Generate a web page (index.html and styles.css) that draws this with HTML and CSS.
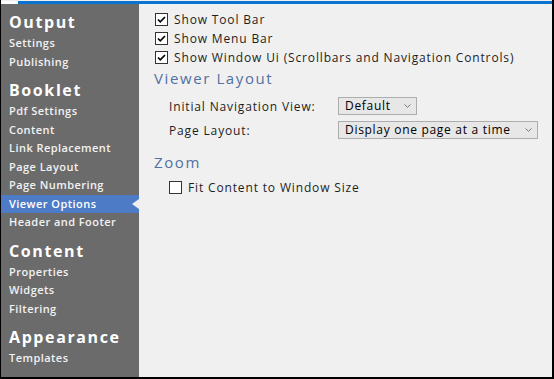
FILE: index.html
```html
<!DOCTYPE html>
<html lang="en">
<head>
    <meta charset="UTF-8">
    <title>Viewer Options</title>
    <link rel="stylesheet" href="styles.css">
</head>
<body>
    <div class="frame">
        <div class="topbar"><span class="topbar-tab"></span></div>
        <div class="main">
            <div class="sidebar">
                <div class="section">
                    <div class="section-title">Output</div>
                    <div class="nav-item">Settings</div>
                    <div class="nav-item">Publishing</div>
                </div>
                <div class="section">
                    <div class="section-title">Booklet</div>
                    <div class="nav-item">Pdf Settings</div>
                    <div class="nav-item">Content</div>
                    <div class="nav-item">Link Replacement</div>
                    <div class="nav-item">Page Layout</div>
                    <div class="nav-item">Page Numbering</div>
                    <div class="nav-item active">Viewer Options</div>
                    <div class="nav-item">Header and Footer</div>
                </div>
                <div class="section">
                    <div class="section-title">Content</div>
                    <div class="nav-item">Properties</div>
                    <div class="nav-item">Widgets</div>
                    <div class="nav-item">Filtering</div>
                </div>
                <div class="section">
                    <div class="section-title">Appearance</div>
                    <div class="nav-item">Templates</div>
                </div>
            </div>

            <div class="content">
                <label class="check-row">
                    <span class="checkbox checked"><svg viewBox="0 0 11 11"><path d="M2 5.5 L4.3 7.8 L9 3" /></svg></span>
                    Show Tool Bar
                </label>
                <label class="check-row">
                    <span class="checkbox checked"><svg viewBox="0 0 11 11"><path d="M2 5.5 L4.3 7.8 L9 3" /></svg></span>
                    Show Menu Bar
                </label>
                <label class="check-row">
                    <span class="checkbox checked"><svg viewBox="0 0 11 11"><path d="M2 5.5 L4.3 7.8 L9 3" /></svg></span>
                    Show Window Ui (Scrollbars and Navigation Controls)
                </label>

                <h2 class="group-title">Viewer Layout</h2>
                <div class="form-grid">
                    <span class="form-label">Initial Navigation View:</span>
                    <span class="dropdown dropdown-short">Default <svg class="chevron" viewBox="0 0 7 4"><path d="M0.5 0.5 L3.5 3.3 L6.5 0.5" /></svg></span>
                    <span class="form-label">Page Layout:</span>
                    <span class="dropdown dropdown-long">Display one page at a time <svg class="chevron" viewBox="0 0 7 4"><path d="M0.5 0.5 L3.5 3.3 L6.5 0.5" /></svg></span>
                </div>

                <h2 class="group-title zoom-title">Zoom</h2>
                <label class="check-row indented">
                    <span class="checkbox"></span>
                    Fit Content to Window Size
                </label>
            </div>
        </div>
    </div>
</body>
</html>
```

FILE: styles.css
```css
body {
    margin: 0;
    font-family: "Open Sans", "Noto Sans", sans-serif;
    background-color: #f0f0f0;
}
.frame {
    width: 554px;
    height: 379px;
    box-sizing: border-box;
    border-left: 1px solid #000;
    border-right: 2px solid #000;
    border-bottom: 2px solid #000;
    display: flex;
    flex-direction: column;
    background-color: #f0f0f0;
    overflow: hidden;
}
.topbar {
    height: 3px;
    margin-top: 1px;
    background-color: #0b74d0;
    display: flex;
}
.topbar-tab {
    width: 17px;
    background-color: #fff;
}
.main {
    flex: 1;
    display: flex;
}
.sidebar {
    width: 138px;
    background-color: #6b6b6b;
    padding-top: 6px;
}
.section + .section {
    margin-top: 7px;
}
.section-title {
    height: 24px;
    line-height: 24px;
    padding-left: 8px;
    font-size: 16px;
    font-weight: 700;
    color: #fff;
    letter-spacing: 1.6px;
}
.nav-item {
    position: relative;
    height: 18.5px;
    line-height: 18.5px;
    padding-left: 8px;
    font-size: 11px;
    font-weight: 600;
    color: #f2f2f2;
    letter-spacing: 0.45px;
}
.nav-item.active {
    background-color: #4d7bc5;
    color: #fff;
}
.nav-item.active::after {
    content: "";
    position: absolute;
    right: 0;
    top: 4px;
    border-top: 5px solid transparent;
    border-bottom: 5px solid transparent;
    border-right: 7px solid #f0f0f0;
}
.content {
    flex: 1;
    padding: 6px 0 0 16px;
    color: #1e1e1e;
    font-size: 12px;
    letter-spacing: 0.85px;
}
.check-row {
    display: flex;
    align-items: center;
    gap: 6px;
    height: 19px;
}
.check-row.indented {
    margin-left: 14px;
}
.checkbox {
    width: 11px;
    height: 11px;
    border: 1px solid #333;
    background-color: #fff;
    display: flex;
}
.checkbox svg {
    width: 11px;
    height: 11px;
    fill: none;
    stroke: #000;
    stroke-width: 1.7;
}
.group-title {
    margin: 1px 0 0 -1px;
    font-size: 15px;
    font-weight: 400;
    color: #5171a3;
    height: 21px;
    line-height: 21px;
    letter-spacing: 1.6px;
}
.zoom-title {
    margin-top: 13px;
    margin-bottom: 5px;
}
.form-grid {
    display: grid;
    grid-template-columns: 169px auto;
    row-gap: 6px;
    margin: 8px 0 0 14px;
    align-items: center;
}
.dropdown {
    justify-self: start;
    height: 16px;
    line-height: 16px;
    padding: 0 5px 0 6px;
    border: 1px solid #adadad;
    background-color: #e7e7e7;
    display: flex;
    align-items: center;
    justify-content: space-between;
    color: #000;
    letter-spacing: 0.7px;
}
.dropdown-short {
    width: 66px;
}
.dropdown-long {
    width: 187px;
}
.chevron {
    width: 7px;
    height: 4px;
    fill: none;
    stroke: #777;
    stroke-width: 1;
}
```
